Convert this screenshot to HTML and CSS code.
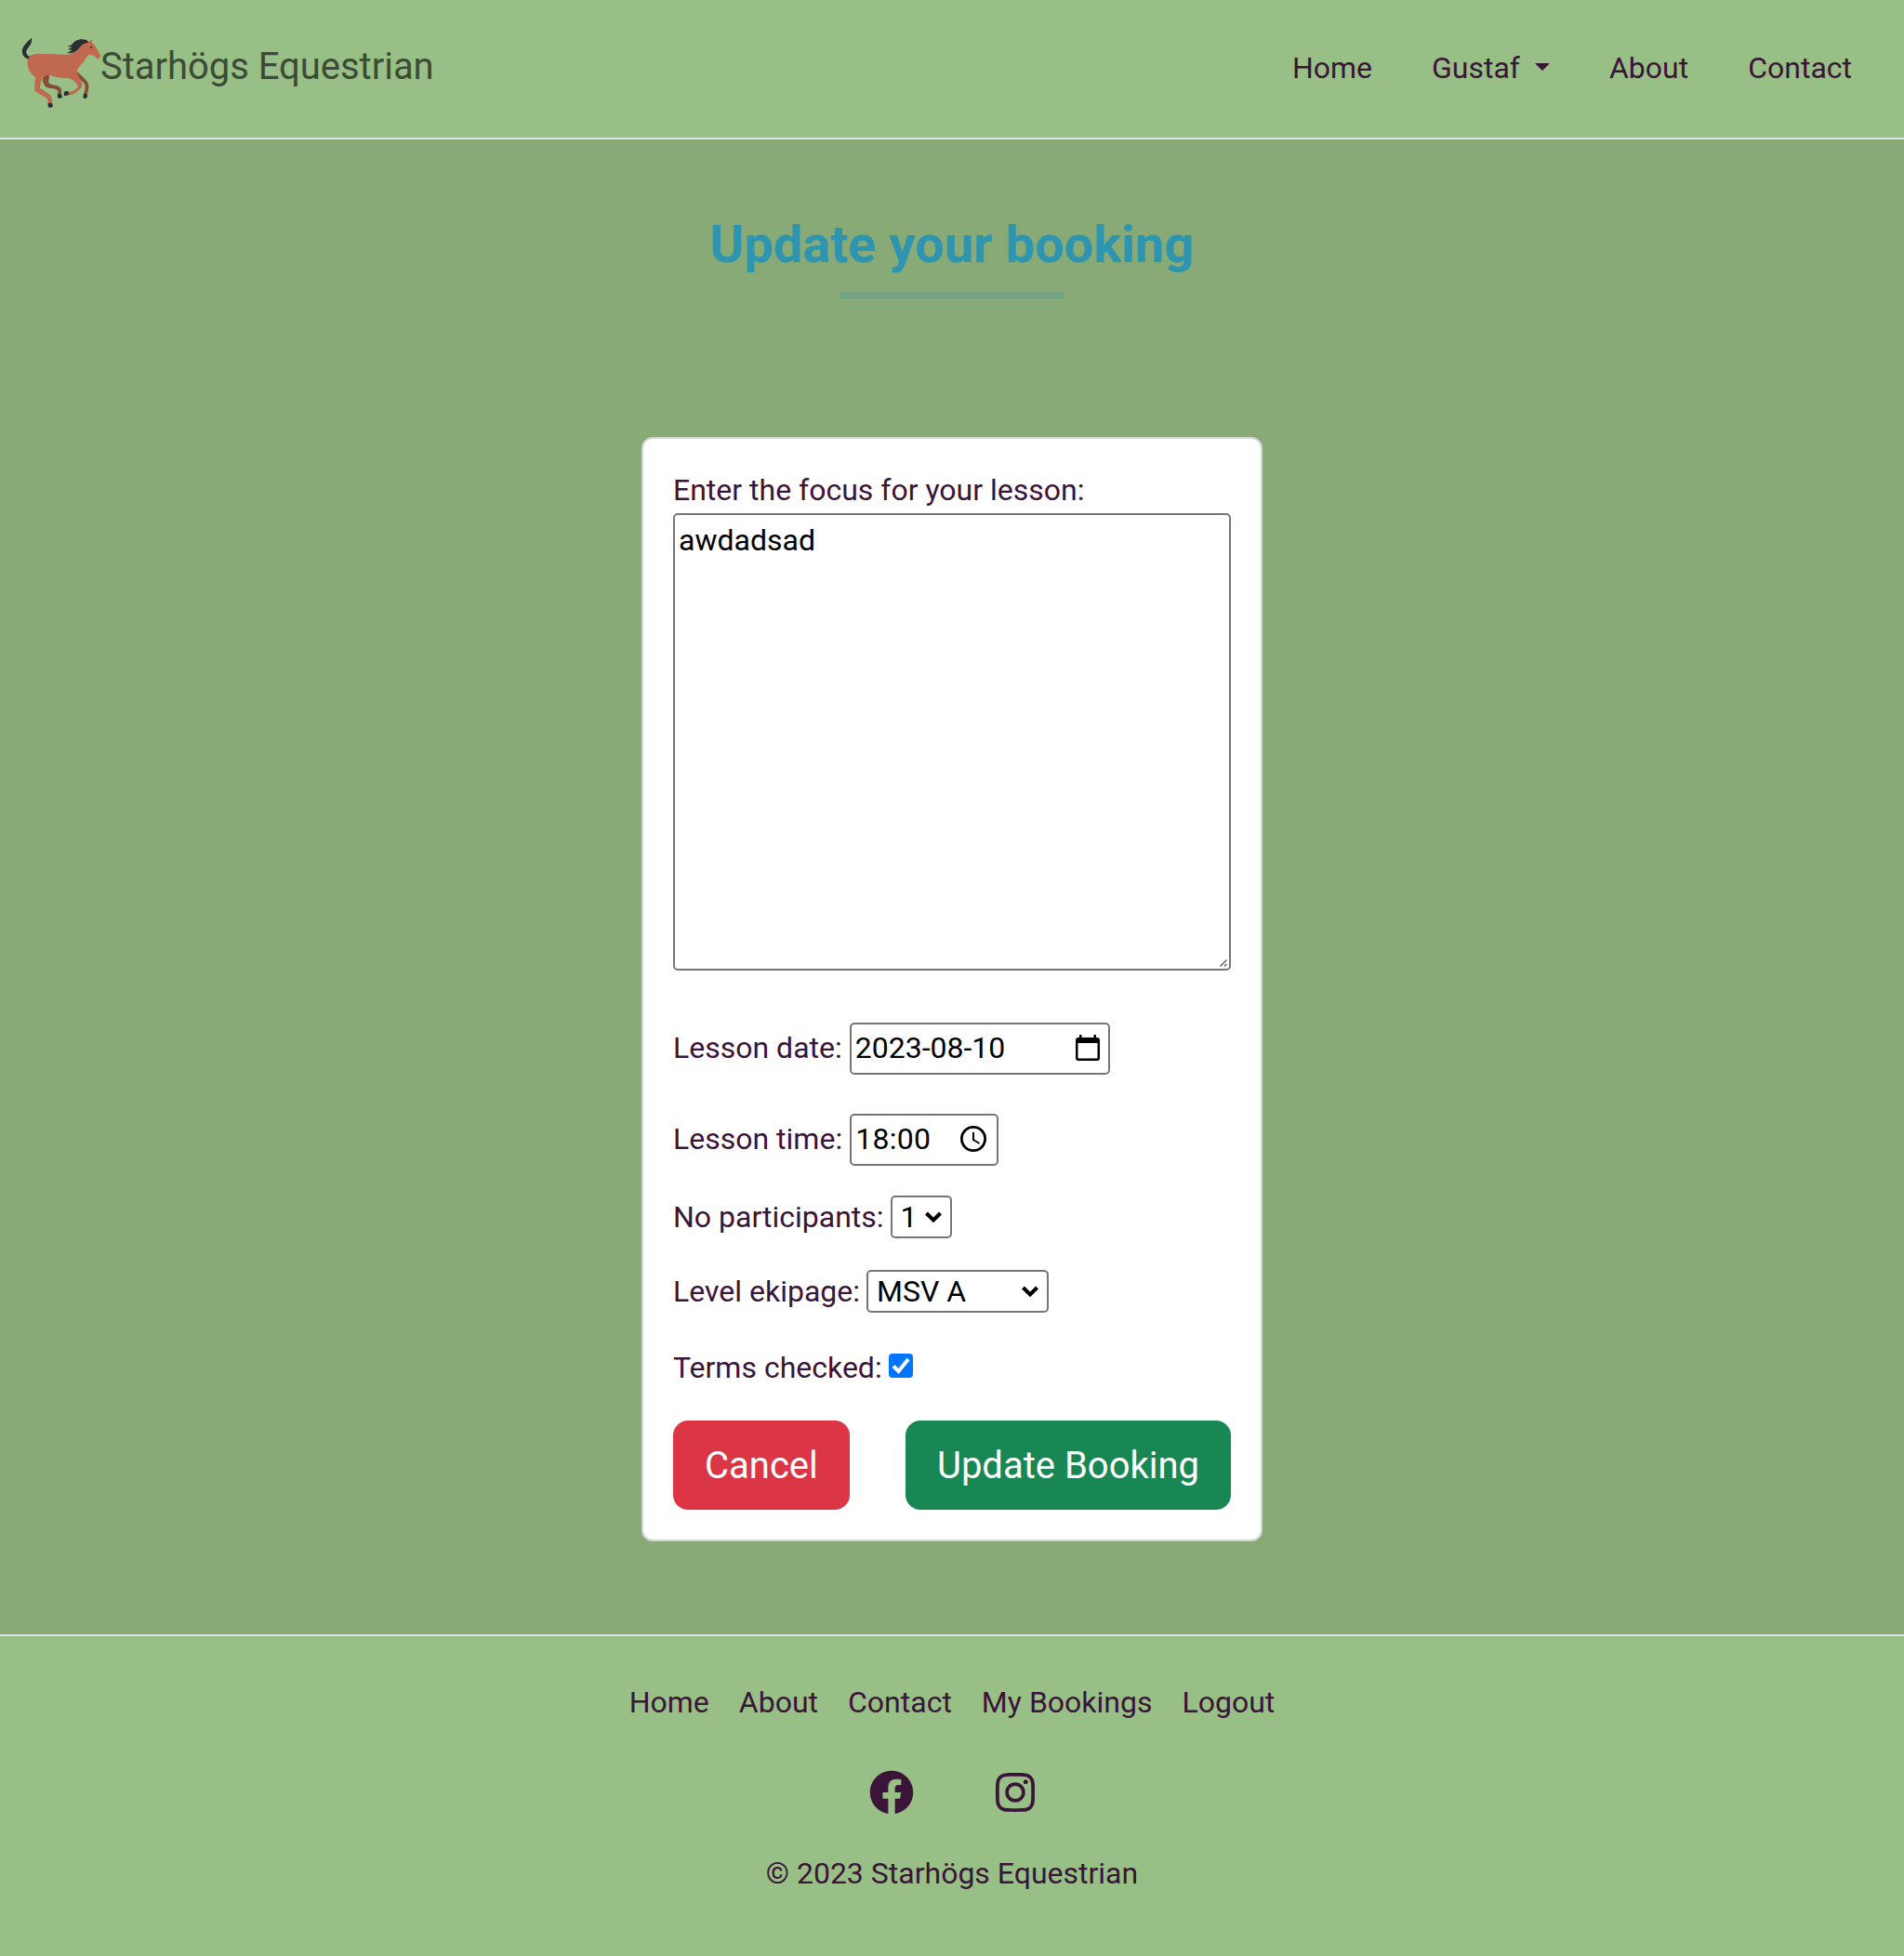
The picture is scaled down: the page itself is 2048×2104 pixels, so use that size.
FILE: index.html
```html
<!DOCTYPE html>
<html lang="en">
<head>
<meta charset="utf-8">
<title>Starhögs Equestrian</title>
<link rel="stylesheet" href="styles.css">
</head>
<body>
<header class="site-header">
  <a class="brand">
    <svg class="brand-logo" viewBox="0 0 276 252">
      <path fill="#292f33" d="M42 14C32 24 16 36 12 52C10 68 18 82 34 83L40 74C28 74 22 64 26 54C31 43 45 34 42 14Z"/>
      <path fill="#874b38" d="M80 138L100 132L97 152C94 160 102 164 112 166C128 169 136 172 138 182V198H127V188C127 182 120 179 106 177C94 175 86 174 83 166Q76 152 78 146ZM187 120C202 138 224 150 226 168C227 178 223 188 221 198L210 196C214 184 217 174 214 166C208 152 196 150 186 134Z"/>
      <path fill="#c1694f" d="M29 98C28 76 38 67 60 66L100 66L150 69C174 68 186 60 196 46C202 34 210 28 226 28Q232 26 233 17Q239 20 236 29Q246 33 248 43L263 68C267 76 260 83 252 80L242 71L226 68C216 80 210 94 196 107C188 115 188 121 190 130C194 142 206 156 205 168C202 180 182 197 162 200L159 189C174 188 186 182 192 172C188 160 174 146 160 144C136 145 116 140 100 134L80 136C74 148 70 164 69 176L98 195C106 200 108 208 108 228H95C96 218 94 212 88 207L56 188C50 184 50 180 52 170L54 140C40 132 30 116 29 98Z"/>
      <circle cx="234" cy="44" r="3" fill="#292f33"/>
      <path fill="#292f33" d="M226 26C216 17 198 16 184 24C178 27 174 35 168 38Q163 41 158 39Q162 45 172 43Q168 50 159 51Q166 55 173 52Q167 60 154 63C178 68 190 55 199 43Q208 31 222 31ZM94 226L108 224L111 236Q104 241 96 238ZM146 190Q152 184 160 187L163 196Q157 203 147 200ZM125 196L138 194L141 206Q136 211 126 208ZM210 194L221 196L222 205L216 211L208 208Z"/>
    </svg>
    <span class="brand-name">Starhögs Equestrian</span>
  </a>
  <nav class="main-nav">
    <a>Home</a>
    <a>Gustaf<span class="caret"></span></a>
    <a>About</a>
    <a>Contact</a>
  </nav>
</header>
<main class="content">
  <h1 class="title">Update your booking</h1>
  <div class="title-bar"></div>
  <form class="card">
    <label class="focus-label">Enter the focus for your lesson:</label>
    <div class="box textarea">awdadsad
      <svg class="grip" viewBox="0 0 10 10"><path d="M1.500 8.500L8.500 1.500M6 8.500L8.500 6" stroke="#555" stroke-width="1.400" fill="none"/></svg>
    </div>
    <div class="row row-date"><label>Lesson date:</label>
      <div class="box field field-date"><span>2023-08-10</span>
        <svg class="icon-date" viewBox="0 0 26 28"><path fill-rule="evenodd" d="M4 0h2.500v3h13V0H22v3h1q3 0 3 3v19q0 3-3 3H3q-3 0-3-3V6q0-3 3-3h1zM2.500 9v16.500h21V9z"/></svg>
      </div></div>
    <div class="row row-time"><label>Lesson time:</label>
      <div class="box field field-time"><span>18:00</span>
        <svg class="icon-time" viewBox="0 0 28 28"><circle cx="14" cy="14" r="12.600" fill="none" stroke="#000" stroke-width="2.800"/><path d="M14 7v8l6.500 4" fill="none" stroke="#000" stroke-width="2"/></svg>
      </div></div>
    <div class="row row-count"><label>No participants:</label>
      <div class="box select select-count"><span>1</span><svg class="chevron" viewBox="0 0 18 12"><path d="M1.500 2L9 9.500L16.500 2" fill="none" stroke="#000" stroke-width="4"/></svg></div></div>
    <div class="row row-level"><label>Level ekipage:</label>
      <div class="box select select-level"><span>MSV A</span><svg class="chevron" viewBox="0 0 18 12"><path d="M1.500 2L9 9.500L16.500 2" fill="none" stroke="#000" stroke-width="4"/></svg></div></div>
    <div class="row row-terms"><label>Terms checked:</label>
      <svg class="check" viewBox="0 0 26 26"><rect width="26" height="26" rx="4" fill="#0075ff"/><path d="M5 13.500L10.500 19L21 6" fill="none" stroke="#fff" stroke-width="4"/></svg></div>
    <div class="actions"><a class="btn btn-cancel">Cancel</a><a class="btn btn-update">Update Booking</a></div>
  </form>
</main>
<footer class="site-footer">
  <nav class="footer-nav"><a>Home</a><a>About</a><a>Contact</a><a>My Bookings</a><a>Logout</a></nav>
  <div class="social">
    <svg class="facebook" viewBox="0 0 512 512"><path fill="currentColor" d="M504 256C504 119 393 8 256 8S8 119 8 256c0 123.780 90.690 226.380 209.250 245V327.690h-63V256h63v-54.640c0-62.150 37-96.480 93.670-96.480 27.140 0 55.520 4.840 55.520 4.840v61h-31.280c-30.800 0-40.410 19.120-40.410 38.730V256h68.780l-11 71.690h-57.780V501C413.310 482.380 504 379.780 504 256z"/></svg>
    <svg class="instagram" viewBox="0 0 448 512"><path fill="currentColor" d="M224.100 141c-63.600 0-114.900 51.300-114.900 114.900s51.300 114.900 114.900 114.900S339 319.500 339 255.900 287.700 141 224.100 141zm0 189.600c-41.100 0-74.700-33.500-74.700-74.700s33.500-74.700 74.700-74.700 74.700 33.500 74.700 74.700-33.600 74.700-74.700 74.700zm146.400-194.300c0 14.900-12 26.800-26.800 26.800-14.900 0-26.800-12-26.800-26.800s12-26.800 26.800-26.800 26.800 12 26.800 26.800zm76.100 27.200c-1.700-35.900-9.900-67.700-36.200-93.900-26.200-26.200-58-34.400-93.900-36.200-37-2.100-147.900-2.100-184.900 0-35.800 1.700-67.600 9.900-93.900 36.100s-34.400 58-36.200 93.900c-2.100 37-2.100 147.900 0 184.900 1.700 35.900 9.900 67.700 36.200 93.900s58 34.400 93.900 36.200c37 2.100 147.900 2.100 184.900 0 35.900-1.700 67.700-9.900 93.900-36.200 26.200-26.200 34.400-58 36.200-93.900 2.100-37 2.100-147.800 0-184.800zM398.800 388c-7.800 19.600-22.900 34.700-42.600 42.600-29.500 11.700-99.500 9-132.100 9s-102.700 2.600-132.100-9c-19.600-7.800-34.700-22.900-42.600-42.600-11.700-29.500-9-99.500-9-132.100s-2.600-102.700 9-132.100c7.800-19.600 22.900-34.700 42.600-42.600 29.500-11.700 99.500-9 132.100-9s102.700-2.600 132.100 9c19.600 7.800 34.700 22.900 42.600 42.600 11.700 29.500 9 99.500 9 132.100s2.700 102.700-9 132.100z"/></svg>
  </div>
  <p class="copyright">© 2023 Starhögs Equestrian</p>
</footer>
</body>
</html>
```

FILE: styles.css
```css
* { box-sizing: border-box; }
body { margin: 0; background: #88aa76; color: #3b1439; font: 400 32px/48px Roboto, "Liberation Sans", sans-serif; }
svg { display: block; flex: none; overflow: visible; }
.site-header { height: 150px; padding: 0 24px 0 20px; display: flex; justify-content: space-between; align-items: flex-start; background: #98c086; border-bottom: 2px solid #dee2e6; }
.brand { display: flex; padding-top: 36px; color: #3d4b36; font-size: 40px; line-height: 60px; }
.brand-logo { width: 92px; height: 84px; margin-right: -4px; }
.brand-name { margin-top: 6px; letter-spacing: -0.03px; }
.main-nav { display: flex; padding-top: 49px; }
.main-nav a { display: flex; align-items: center; padding: 0 32px; }
.caret { margin: 0 0 2px 16px; border: 8px solid transparent; border-top-color: currentColor; border-bottom: 0; }
.content { height: 1608px; padding-top: 80px; display: flex; flex-direction: column; align-items: center; }
.title { margin: 0; font-size: 56px; line-height: 67px; font-weight: 700; color: #2e95b0; }
.title-bar { width: 240px; height: 8px; margin-top: 17px; background: #75a385; }
.card { width: 668px; height: 1188px; margin-top: 148px; padding: 31px 32px; background: #fff; border: 2px solid #d3d3d3; border-radius: 12px; }
.focus-label { display: block; height: 49px; }
.box { border: 2px solid #767676; border-radius: 5px; background: #fff; color: #000; }
.textarea { position: relative; height: 492px; padding: 3px 4px; }
.grip { position: absolute; right: 1px; bottom: 1px; width: 10px; height: 10px; }
.row { display: flex; align-items: center; gap: 7px; }
.row-date { margin-top: 56px; height: 56px; gap: 8px; }
.row-time { margin-top: 42px; height: 56px; gap: 8px; }
.row-date label, .row-time label, .field span { padding-bottom: 2px; }
.row-count { margin-top: 32px; height: 46px; }
.row-level { margin-top: 34px; height: 46px; }
.row-terms { margin-top: 34px; height: 48px; }
.row-terms label { padding-top: 2px; }
.field { height: 56px; padding: 0 9px 0 4px; display: flex; align-items: center; justify-content: space-between; }
.field-date { width: 280px; }
.field-time { width: 160px; padding-right: 11px; letter-spacing: 0.3px; }
.icon-date { width: 26px; height: 28px; margin-bottom: 2px; }
.icon-time { width: 28px; height: 28px; margin-bottom: 2px; }
.select { height: 46px; padding: 0 9px; display: flex; align-items: center; justify-content: space-between; }
.select-count { width: 66px; }
.select-level { width: 196px; }
.chevron { width: 18px; height: 12px; margin-bottom: 1px; }
.check { width: 26px; height: 26px; margin-bottom: 2px; }
.actions { display: flex; justify-content: space-between; margin-top: 34px; }
.btn { height: 96px; border-radius: 16px; padding: 1px 34px 0; font-size: 40px; line-height: 96px; color: #fff; }
.btn-cancel { background: #dc3545; }
.btn-update { background: #198754; }
.site-footer { height: 346px; padding-top: 47px; background: #98c086; border-top: 2px solid #dee2e6; display: flex; flex-direction: column; align-items: center; }
.footer-nav { display: flex; gap: 32px; }
.social { display: flex; align-items: center; gap: 88px; margin-top: 49px; }
.facebook { width: 48px; height: 48px; }
.instagram { width: 42px; height: 48px; }
.copyright { margin: 39px 0 0; }
```
